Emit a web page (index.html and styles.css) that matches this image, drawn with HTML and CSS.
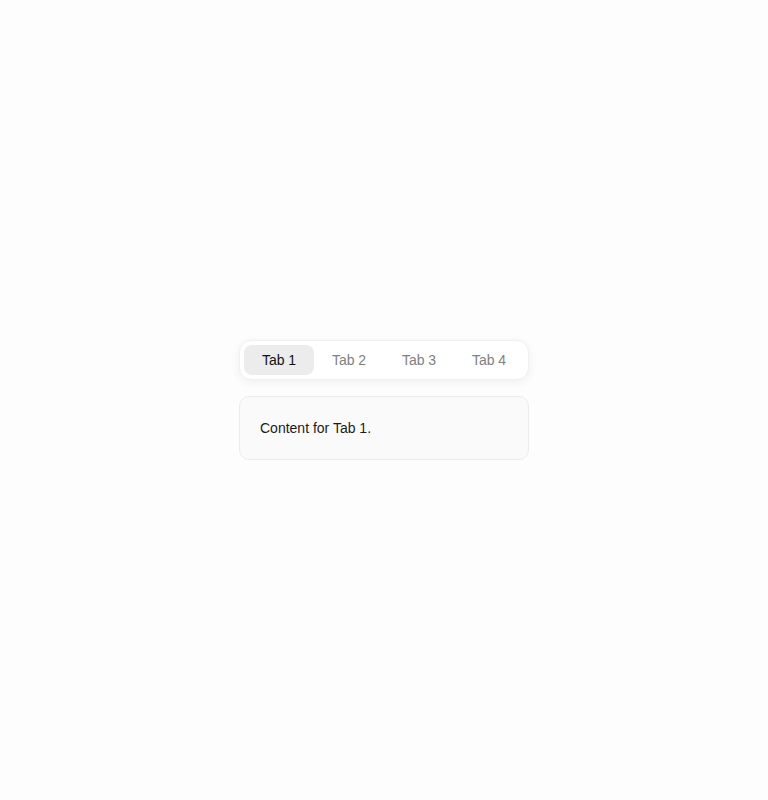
FILE: index.html
```html
<!DOCTYPE html>
<html>
<head>
<meta charset="utf-8">
<link rel="stylesheet" href="styles.css">
</head>
<body>
<div class="wrap">
  <div class="tabs">
    <button class="tab active">Tab 1</button>
    <button class="tab">Tab 2</button>
    <button class="tab">Tab 3</button>
    <button class="tab">Tab 4</button>
  </div>
  <div class="panel">Content for Tab 1.</div>
</div>
</body>
</html>
```
FILE: styles.css
```css
html, body { margin: 0; padding: 0; }
body {
  background: #fdfdfd;
  font-family: "Liberation Sans", Arial, sans-serif;
  height: 800px;
  display: flex;
  align-items: center;
  justify-content: center;
}
.wrap {
  width: 290px;
  display: flex;
  flex-direction: column;
  gap: 16px;
}
.tabs {
  display: flex;
  padding: 4px;
  background: #ffffff;
  border: 1px solid #f0f0f0;
  border-radius: 12px;
  box-shadow: 0 2px 10px rgba(0,0,0,0.06);
}
.tab {
  flex: 1;
  height: 30px;
  border: none;
  background: transparent;
  border-radius: 8px;
  font-family: inherit;
  font-size: 14px;
  color: #808080;
  padding: 0;
  cursor: pointer;
}
.tab.active {
  background: #ececec;
  color: #111;
}
.panel {
  background: #fafafa;
  border: 1px solid #ececec;
  border-radius: 10px;
  padding: 23px 20px 22px;
  font-size: 14px;
  color: #1a1a1a;
  line-height: 17px;
}
```
